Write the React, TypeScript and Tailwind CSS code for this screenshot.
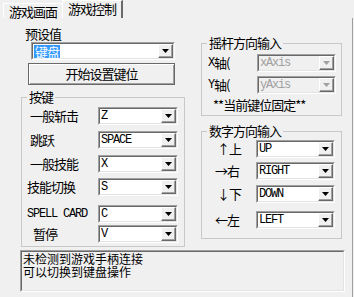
import React from "react";

const CJK = "font-['SimSun','Noto_Sans_CJK_SC',sans-serif]";
const MONO = "font-['Liberation_Mono','Noto_Sans_CJK_SC',monospace]";

function Arrow({ disabled }: { disabled?: boolean }) {
  return (
    <svg width="7" height="4" viewBox="0 0 7 4">
      <path d="M0 0H7L3.5 4Z" fill={disabled ? "#a0a0a0" : "#000"} />
    </svg>
  );
}

function Combo({
  value,
  w,
  disabled,
  highlight,
}: {
  value: string;
  w: string;
  disabled?: boolean;
  highlight?: boolean;
}) {
  return (
    <div
      className={`flex h-[18px] ${w} border border-t-[#a0a0a0] border-l-[#a0a0a0] border-b-white border-r-white`}
    >
      <div
        className={`flex flex-1 border border-t-[#696969] border-l-[#696969] border-b-[#e3e3e3] border-r-[#e3e3e3] ${
          disabled ? "bg-[#f0f0f0]" : "bg-white"
        }`}
      >
        <div className="flex flex-1 items-center pl-[1px]">
          {highlight ? (
            <span
              className={`${CJK} bg-[#3399ff] text-white text-[13px] leading-[13px] tracking-[-1px] px-[1px]`}
            >
              {value}
            </span>
          ) : (
            <span
              className={`${MONO} ${
                disabled ? "text-[#a0a0a0]" : "text-black"
              } text-[12px] leading-[14px] tracking-[-1.2px]`}
            >
              {value}
            </span>
          )}
        </div>
        <div className="flex h-[14px] w-[15px] items-center justify-center bg-[#f0f0f0] border border-t-white border-l-white border-b-[#696969] border-r-[#696969] shadow-[inset_-1px_-1px_0_#a0a0a0]">
          <Arrow disabled={disabled} />
        </div>
      </div>
    </div>
  );
}

function Legend({ text }: { text: string }) {
  return (
    <legend
      className={`${CJK} ml-[5px] px-[2px] text-[13px] leading-[14px] tracking-[-1px] text-black`}
    >
      {text}
    </legend>
  );
}

function KeyRow({
  label,
  value,
  mt,
  lpad,
  mono,
}: {
  label: string;
  value: string;
  mt: string;
  lpad: string;
  mono?: boolean;
}) {
  return (
    <div className={`flex h-[18px] items-center ${mt}`}>
      <div className={`flex w-[76px] ${lpad}`}>
        <span
          className={`${mono ? MONO + " text-[12px] tracking-[-1.2px]" : CJK + " text-[13px] tracking-[-1px]"} leading-[14px] text-black whitespace-nowrap`}
        >
          {label}
        </span>
      </div>
      <Combo value={value} w="w-[80px]" />
    </div>
  );
}

function DirRow({ label, value, mt, lpad }: { label: string; value: string; mt: string; lpad: string }) {
  return (
    <div className={`flex h-[17px] items-center ${mt}`}>
      <div className={`flex w-[54px] ${lpad}`}>
        <span className={`${CJK} text-[13px] leading-[14px] tracking-[-1px] text-black whitespace-nowrap`}>
          {label}
        </span>
      </div>
      <Combo value={value} w="w-[79px]" />
    </div>
  );
}

export default function App() {
  return (
    <div className="w-[354px] h-[297px] bg-[#f0f0f0] overflow-hidden flex flex-col text-[13px] leading-[14px]">
      {/* tabs */}
      <div className="flex h-[18px] items-end">
        <div className="ml-[3px] flex h-[15px] w-[59px] items-start justify-center border-t border-l border-t-white border-l-white">
          <span className={`${CJK} text-[13px] leading-[14px] tracking-[-1px] text-black mt-[1px]`}>
            游戏画面
          </span>
        </div>
        <div className="flex h-[18px] w-[61px] items-start justify-center border-l border-t border-l-white border-t-white border-r-2 border-r-[#696969]">
          <span className={`${CJK} text-[13px] leading-[14px] tracking-[-1px] text-black mt-[1px]`}>
            游戏控制
          </span>
        </div>
      </div>

      {/* panel */}
      <div className="flex-1 w-[353px] border-r border-r-[#a0a0a0] flex flex-col">
        <div className="flex h-[229px]">
          {/* left column */}
          <div className="ml-[21px] w-[164px] flex flex-col">
            <div className="mt-[9px] ml-[4px] flex h-[14px]">
              <span className={`${CJK} text-[13px] leading-[14px] tracking-[-1px] text-black`}>
                预设值
              </span>
            </div>
            <div className="mt-[1px] ml-[10px]">
              <Combo value="键盘" w="w-[144px]" highlight />
            </div>
            <div className="mt-[3px] ml-[7px] flex h-[22px] w-[147px] items-center justify-center border border-[#696969] shadow-[inset_1px_1px_0_#ffffff,inset_-1px_-1px_0_#a0a0a0]">
              <span className={`${CJK} text-[13px] leading-[14px] tracking-[-1px] text-black`}>
                开始设置键位
              </span>
            </div>
            <fieldset className="mt-[5px] h-[157px] w-[164px] border border-[#c8c8c8]">
              <Legend text="按键" />
              <KeyRow label="一般斩击" value="Z" mt="mt-[3px]" lpad="pl-[8px]" />
              <KeyRow label="跳跃" value="SPACE" mt="mt-[6px]" lpad="pl-[8px]" />
              <KeyRow label="一般技能" value="X" mt="mt-[6px]" lpad="pl-[8px]" />
              <KeyRow label="技能切换" value="S" mt="mt-[5px]" lpad="pl-[5px]" />
              <KeyRow label="SPELL CARD" value="C" mt="mt-[9px]" lpad="pl-[5px]" mono />
              <KeyRow label="暂停" value="V" mt="mt-[2px]" lpad="pl-[11px]" />
            </fieldset>
          </div>

          {/* right column */}
          <div className="ml-[16px] w-[141px] flex flex-col">
            <fieldset className="mt-[18px] h-[80px] w-[141px] border border-[#c8c8c8]">
              <Legend text="摇杆方向输入" />
              <div className="flex h-[18px] items-center mt-[4px]">
                <div className="flex w-[55px] pl-[6px] items-center">
                  <span className={`${MONO} text-[12px] tracking-[-1.2px] leading-[14px] text-black`}>X</span>
                  <span className={`${CJK} text-[13px] tracking-[-1px] leading-[14px] text-black`}>轴(</span>
                </div>
                <Combo value="xAxis" w="w-[79px]" disabled />
              </div>
              <div className="flex h-[18px] items-center mt-[4px]">
                <div className="flex w-[55px] pl-[6px] items-center">
                  <span className={`${MONO} text-[12px] tracking-[-1.2px] leading-[14px] text-black`}>Y</span>
                  <span className={`${CJK} text-[13px] tracking-[-1px] leading-[14px] text-black`}>轴(</span>
                </div>
                <Combo value="yAxis" w="w-[79px]" disabled />
              </div>
              <div className="mt-[4px] pl-[11px] flex h-[14px]">
                <span className={`${CJK} text-[13px] leading-[14px] tracking-[-1px] text-black whitespace-nowrap`}>
                  **当前键位固定**
                </span>
              </div>
            </fieldset>
            <fieldset className="mt-[8px] h-[115px] w-[141px] border border-[#c8c8c8]">
              <Legend text="数字方向输入" />
              <DirRow label="↑上" value="UP" mt="mt-[2px]" lpad="pl-[15px]" />
              <DirRow label="→右" value="RIGHT" mt="mt-[5px]" lpad="pl-[13px]" />
              <DirRow label="↓下" value="DOWN" mt="mt-[6px]" lpad="pl-[15px]" />
              <DirRow label="←左" value="LEFT" mt="mt-[9px]" lpad="pl-[13px]" />
            </fieldset>
          </div>
        </div>

        {/* status box */}
        <div className="mt-[3px] ml-[20px] h-[42px] w-[325px] border border-t-[#a0a0a0] border-l-[#a0a0a0] border-b-white border-r-white">
          <div className="h-full w-full border border-t-[#696969] border-l-[#696969] border-b-[#e3e3e3] border-r-[#e3e3e3] pl-[1px]">
            <div className={`${CJK} text-[12px] leading-[13px] text-black`}>
              未检测到游戏手柄连接
            </div>
            <div className={`${CJK} text-[12px] leading-[13px] text-black`}>
              可以切换到键盘操作
            </div>
          </div>
        </div>
      </div>
    </div>
  );
}
